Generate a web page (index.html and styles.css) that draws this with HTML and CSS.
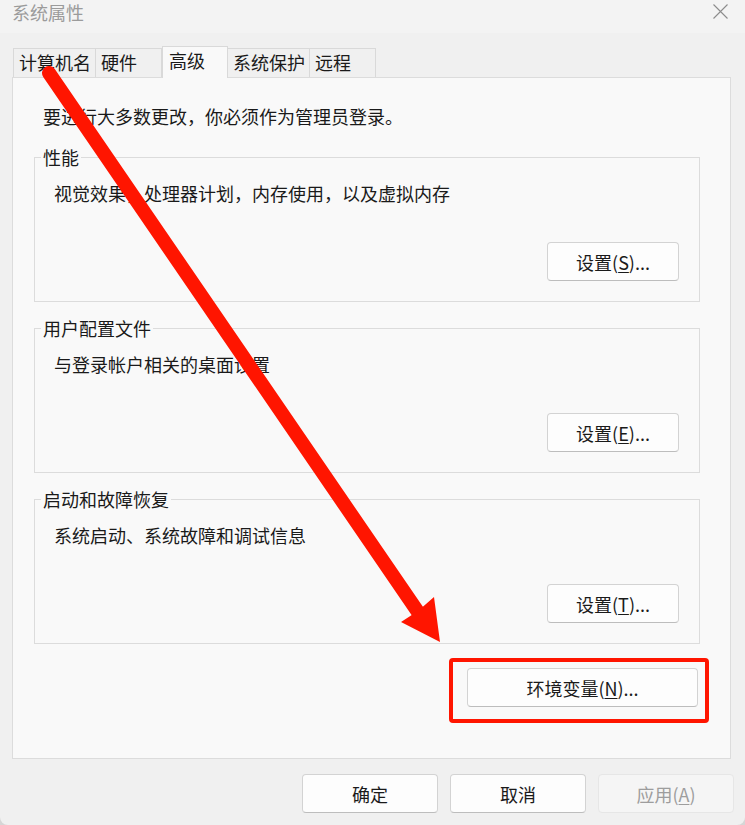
FILE: index.html
```html
<!DOCTYPE html>
<html lang="zh-CN">
<head>
    <meta charset="UTF-8">
    <title>系统属性</title>
    <link rel="stylesheet" href="styles.css">
</head>
<body>

<div class="window">
    <div class="titlebar">
        <span class="title">系统属性</span>
        <svg class="close" width="15" height="15" viewBox="0 0 15 15">
            <path d="M0.5 0.5 L14.5 14.5 M14.5 0.5 L0.5 14.5" stroke="#8c8c8c" stroke-width="1.1" fill="none"/>
        </svg>
    </div>

    <div class="tabs">
        <div class="tab">计算机名</div>
        <div class="tab">硬件</div>
        <div class="tab active">高级</div>
        <div class="tab">系统保护</div>
        <div class="tab">远程</div>
    </div>

    <div class="panel">
        <p class="note">要进行大多数更改，你必须作为管理员登录。</p>

        <fieldset class="group">
            <legend>性能</legend>
            <p class="desc">视觉效果，处理器计划，内存使用，以及虚拟内存</p>
            <div class="group-actions">
                <button class="btn">设置(<u>S</u>)...</button>
            </div>
        </fieldset>

        <fieldset class="group">
            <legend>用户配置文件</legend>
            <p class="desc">与登录帐户相关的桌面设置</p>
            <div class="group-actions">
                <button class="btn">设置(<u>E</u>)...</button>
            </div>
        </fieldset>

        <fieldset class="group">
            <legend>启动和故障恢复</legend>
            <p class="desc">系统启动、系统故障和调试信息</p>
            <div class="group-actions">
                <button class="btn">设置(<u>T</u>)...</button>
            </div>
        </fieldset>

        <div class="env-row">
            <button class="btn btn-env">环境变量(<u>N</u>)...</button>
        </div>
    </div>

    <div class="footer">
        <button class="btn btn-footer">确定</button>
        <button class="btn btn-footer">取消</button>
        <button class="btn btn-footer" disabled>应用(<u>A</u>)</button>
    </div>

    <!-- 标注：红色箭头和方框 -->
    <svg class="markup" width="745" height="825" viewBox="0 0 745 825">
        <line x1="49" y1="73" x2="418" y2="612" stroke="#ff1500" stroke-width="14" stroke-linecap="round"/>
        <polygon points="440,642 401,622 418,611 434,597" fill="#ff1500"/>
        <rect x="451" y="660" width="256" height="61" rx="2" fill="none" stroke="#ff1500" stroke-width="4"/>
    </svg>
</div>

</body>
</html>
```

FILE: styles.css
```css
/* 对话框基础 */
body {
    margin: 0;
    background-color: #d6d6d6;
    font-family: "Noto Sans CJK SC", "Liberation Sans", sans-serif;
    font-size: 18px;
    color: #1a1a1a;
}
.window {
    position: relative;
    width: 745px;
    height: 825px;
    background-color: #f0f0f0;
    border-radius: 0 0 8px 8px;
    overflow: hidden;
    display: flex;
    flex-direction: column;
}

/* 标题栏 */
.titlebar {
    height: 33px;
    flex-shrink: 0;
    background-color: #f3f3f3;
    display: flex;
    justify-content: space-between;
    align-items: flex-start;
}
.title {
    padding-left: 12px;
    line-height: 24px;
    color: #9b9b9b;
}
.close {
    margin: 4px 17px 0 0;
}

/* 选项卡 */
.tabs {
    display: flex;
    align-items: flex-end;
    height: 31px;
    margin-top: 13px;
    padding-left: 13px;
    flex-shrink: 0;
}
.tab {
    box-sizing: border-box;
    height: 29px;
    min-width: 66px;
    padding: 0 4px 0 5px;
    line-height: 27px;
    border: 1px solid #d9d9d9;
    border-bottom: none;
}
.tab + .tab {
    border-left: none;
}
.tab.active {
    position: relative;
    z-index: 1;
    height: 32px;
    margin-bottom: -1px;
    padding: 0 5px 0 6px;
    min-width: 66px;
    border-left: 1px solid #d9d9d9;
    background-color: #f9f9f9;
}

/* 选项卡内容 */
.panel {
    box-sizing: border-box;
    height: 682px;
    margin: 0 14px 0 12px;
    padding: 26px 30px 0 21px;
    border: 1px solid #dcdcdc;
    background-color: #f9f9f9;
    flex-shrink: 0;
}
.note {
    margin: 0 0 17px 9px;
    line-height: 24px;
}
.group {
    margin: 14px 0 0;
    padding: 12px 20px 20px 19px;
    border: 1px solid #dcdcdc;
    min-width: 0;
}
.group:first-of-type {
    margin-top: 0;
}
.group legend {
    padding: 0 2px;
    margin-left: -13px;
    line-height: 24px;
}
.desc {
    margin: 0;
    line-height: 24px;
}
.group-actions {
    display: flex;
    justify-content: flex-end;
    margin-top: 37px;
}

/* 按钮 */
.btn {
    box-sizing: border-box;
    width: 132px;
    height: 39px;
    padding: 0;
    font-family: inherit;
    font-size: 18px;
    color: #1a1a1a;
    background-color: #fdfdfd;
    border: 1px solid #d3d3d3;
    border-bottom-color: #bdbdbd;
    border-radius: 4px;
}
.btn u {
    text-underline-offset: 2px;
}
.btn:disabled {
    color: #9d9d9d;
    background-color: #f5f5f5;
    border-color: #e6e6e6;
}

.env-row {
    display: flex;
    justify-content: flex-end;
    margin: 24px 2px 0 0;
}
.btn-env {
    width: 231px;
}

/* 底部按钮 */
.footer {
    display: flex;
    justify-content: flex-end;
    gap: 12px;
    margin-top: 15px;
    padding-right: 11px;
}
.btn-footer {
    width: 136px;
}

/* 红色标注层 */
.markup {
    position: absolute;
    left: 0;
    top: 0;
    pointer-events: none;
}
```
